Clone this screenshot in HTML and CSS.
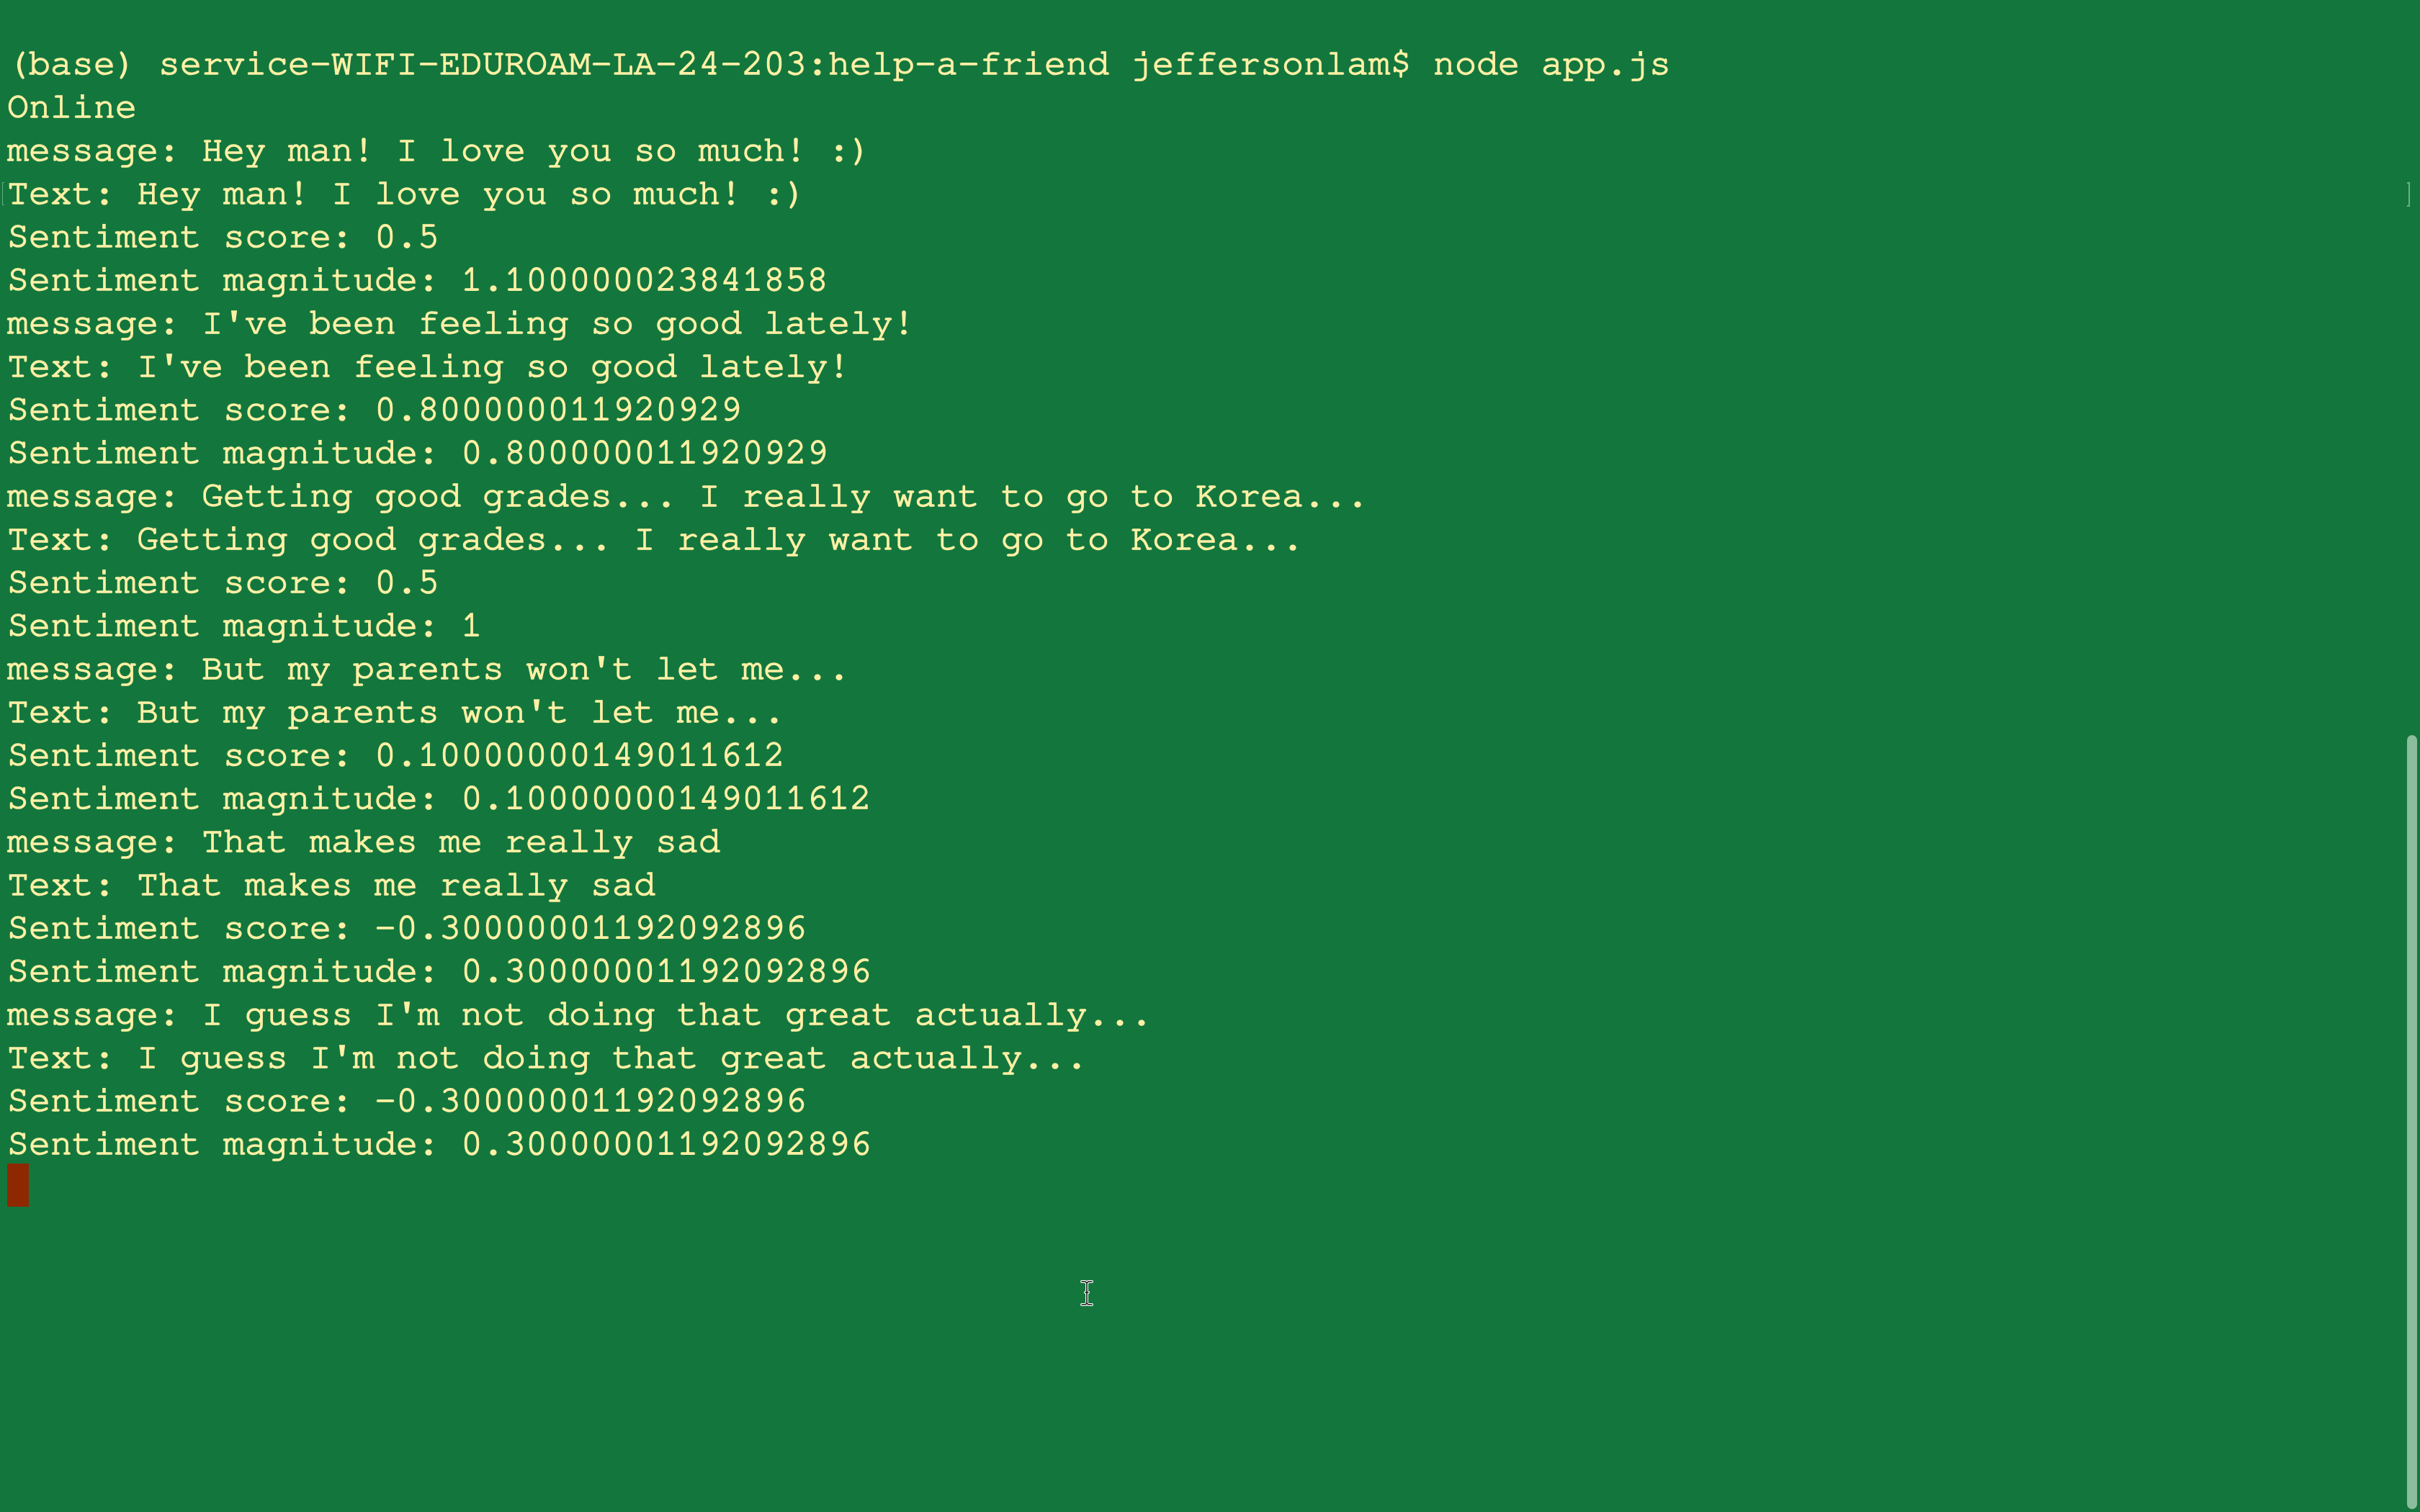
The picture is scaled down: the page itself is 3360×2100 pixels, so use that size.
FILE: index.html
```html
<!DOCTYPE html>
<html>
<head>
<meta charset="utf-8">
<link rel="stylesheet" href="styles.css">
</head>
<body>
<main class="terminal">
<div class="output"><div class="line">(base) service-WIFI-EDUROAM-LA-24-203:help-a-friend jeffersonlam$ node app.js</div><div class="line">Online</div><div class="line">message: Hey man! I love you so much! :)</div><div class="line marked">Text: Hey man! I love you so much! :)</div><div class="line">Sentiment score: 0.5</div><div class="line">Sentiment magnitude: 1.100000023841858</div><div class="line">message: I've been feeling so good lately!</div><div class="line">Text: I've been feeling so good lately!</div><div class="line">Sentiment score: 0.800000011920929</div><div class="line">Sentiment magnitude: 0.800000011920929</div><div class="line">message: Getting good grades... I really want to go to Korea...</div><div class="line">Text: Getting good grades... I really want to go to Korea...</div><div class="line">Sentiment score: 0.5</div><div class="line">Sentiment magnitude: 1</div><div class="line">message: But my parents won't let me...</div><div class="line">Text: But my parents won't let me...</div><div class="line">Sentiment score: 0.10000000149011612</div><div class="line">Sentiment magnitude: 0.10000000149011612</div><div class="line">message: That makes me really sad</div><div class="line">Text: That makes me really sad</div><div class="line">Sentiment score: -0.30000001192092896</div><div class="line">Sentiment magnitude: 0.30000001192092896</div><div class="line">message: I guess I'm not doing that great actually...</div><div class="line">Text: I guess I'm not doing that great actually...</div><div class="line">Sentiment score: -0.30000001192092896</div><div class="line">Sentiment magnitude: 0.30000001192092896</div><div class="line cursor-line"><span class="cursor"></span></div></div>
<div class="mark-left"></div>
<div class="mark-right"></div>
<div class="scrollbar"><div class="thumb"></div></div>
<svg class="ibeam" width="18" height="36" viewBox="0 0 18 36">
<path d="M2 2 h5 l2 2 l2 -2 h5 M9 4 v28 M2 34 h5 l2 -2 l2 2 h5 M7 17 h4" fill="none" stroke="#fff" stroke-width="4" stroke-linecap="round" stroke-linejoin="round"/>
<path d="M2 2 h5 l2 2 l2 -2 h5 M9 4 v28 M2 34 h5 l2 -2 l2 2 h5 M7 17 h4" fill="none" stroke="#111" stroke-width="1.6" stroke-linecap="round" stroke-linejoin="round"/>
</svg>
</main>
</body>
</html>
```

FILE: styles.css
```css
html, body {
  margin: 0;
  padding: 0;
  background: #13773d;
}
.terminal {
  position: relative;
  width: 3360px;
  height: 2100px;
  overflow: hidden;
  background: #13773d;
  box-sizing: border-box;
  padding: 56px 0 0 10px;
}
.output {
  font-family: "Nimbus Mono PS", "Nimbus Mono L", "FreeMono", "Courier 10 Pitch", "Liberation Mono", monospace;
  font-size: 50px;
  line-height: 64px;
  color: #fff0a5;
  white-space: pre;
  -webkit-text-stroke: 1.6px #fff0a5;
}
.line {
  height: 60px;
}
.cursor-line {
  display: flex;
}
.cursor {
  display: block;
  width: 30px;
  height: 60px;
  background: #8e2800;
}
.mark-left {
  position: absolute;
  left: 3px;
  top: 253px;
  width: 2px;
  height: 30px;
  border: 1px solid rgba(170, 215, 180, 0.55);
  border-right: none;
}
.mark-right {
  position: absolute;
  left: 3342px;
  top: 253px;
  width: 2px;
  height: 30px;
  border: 2px solid rgba(170, 215, 180, 0.6);
  border-left: none;
}
.scrollbar {
  position: absolute;
  right: 0;
  top: 0;
  width: 18px;
  height: 2100px;
}
.thumb {
  position: absolute;
  left: 0;
  top: 1021px;
  width: 14px;
  height: 1075px;
  border-radius: 7px;
  background: #8cbd9c;
}
.ibeam {
  position: absolute;
  left: 1500px;
  top: 1778px;
}
```
